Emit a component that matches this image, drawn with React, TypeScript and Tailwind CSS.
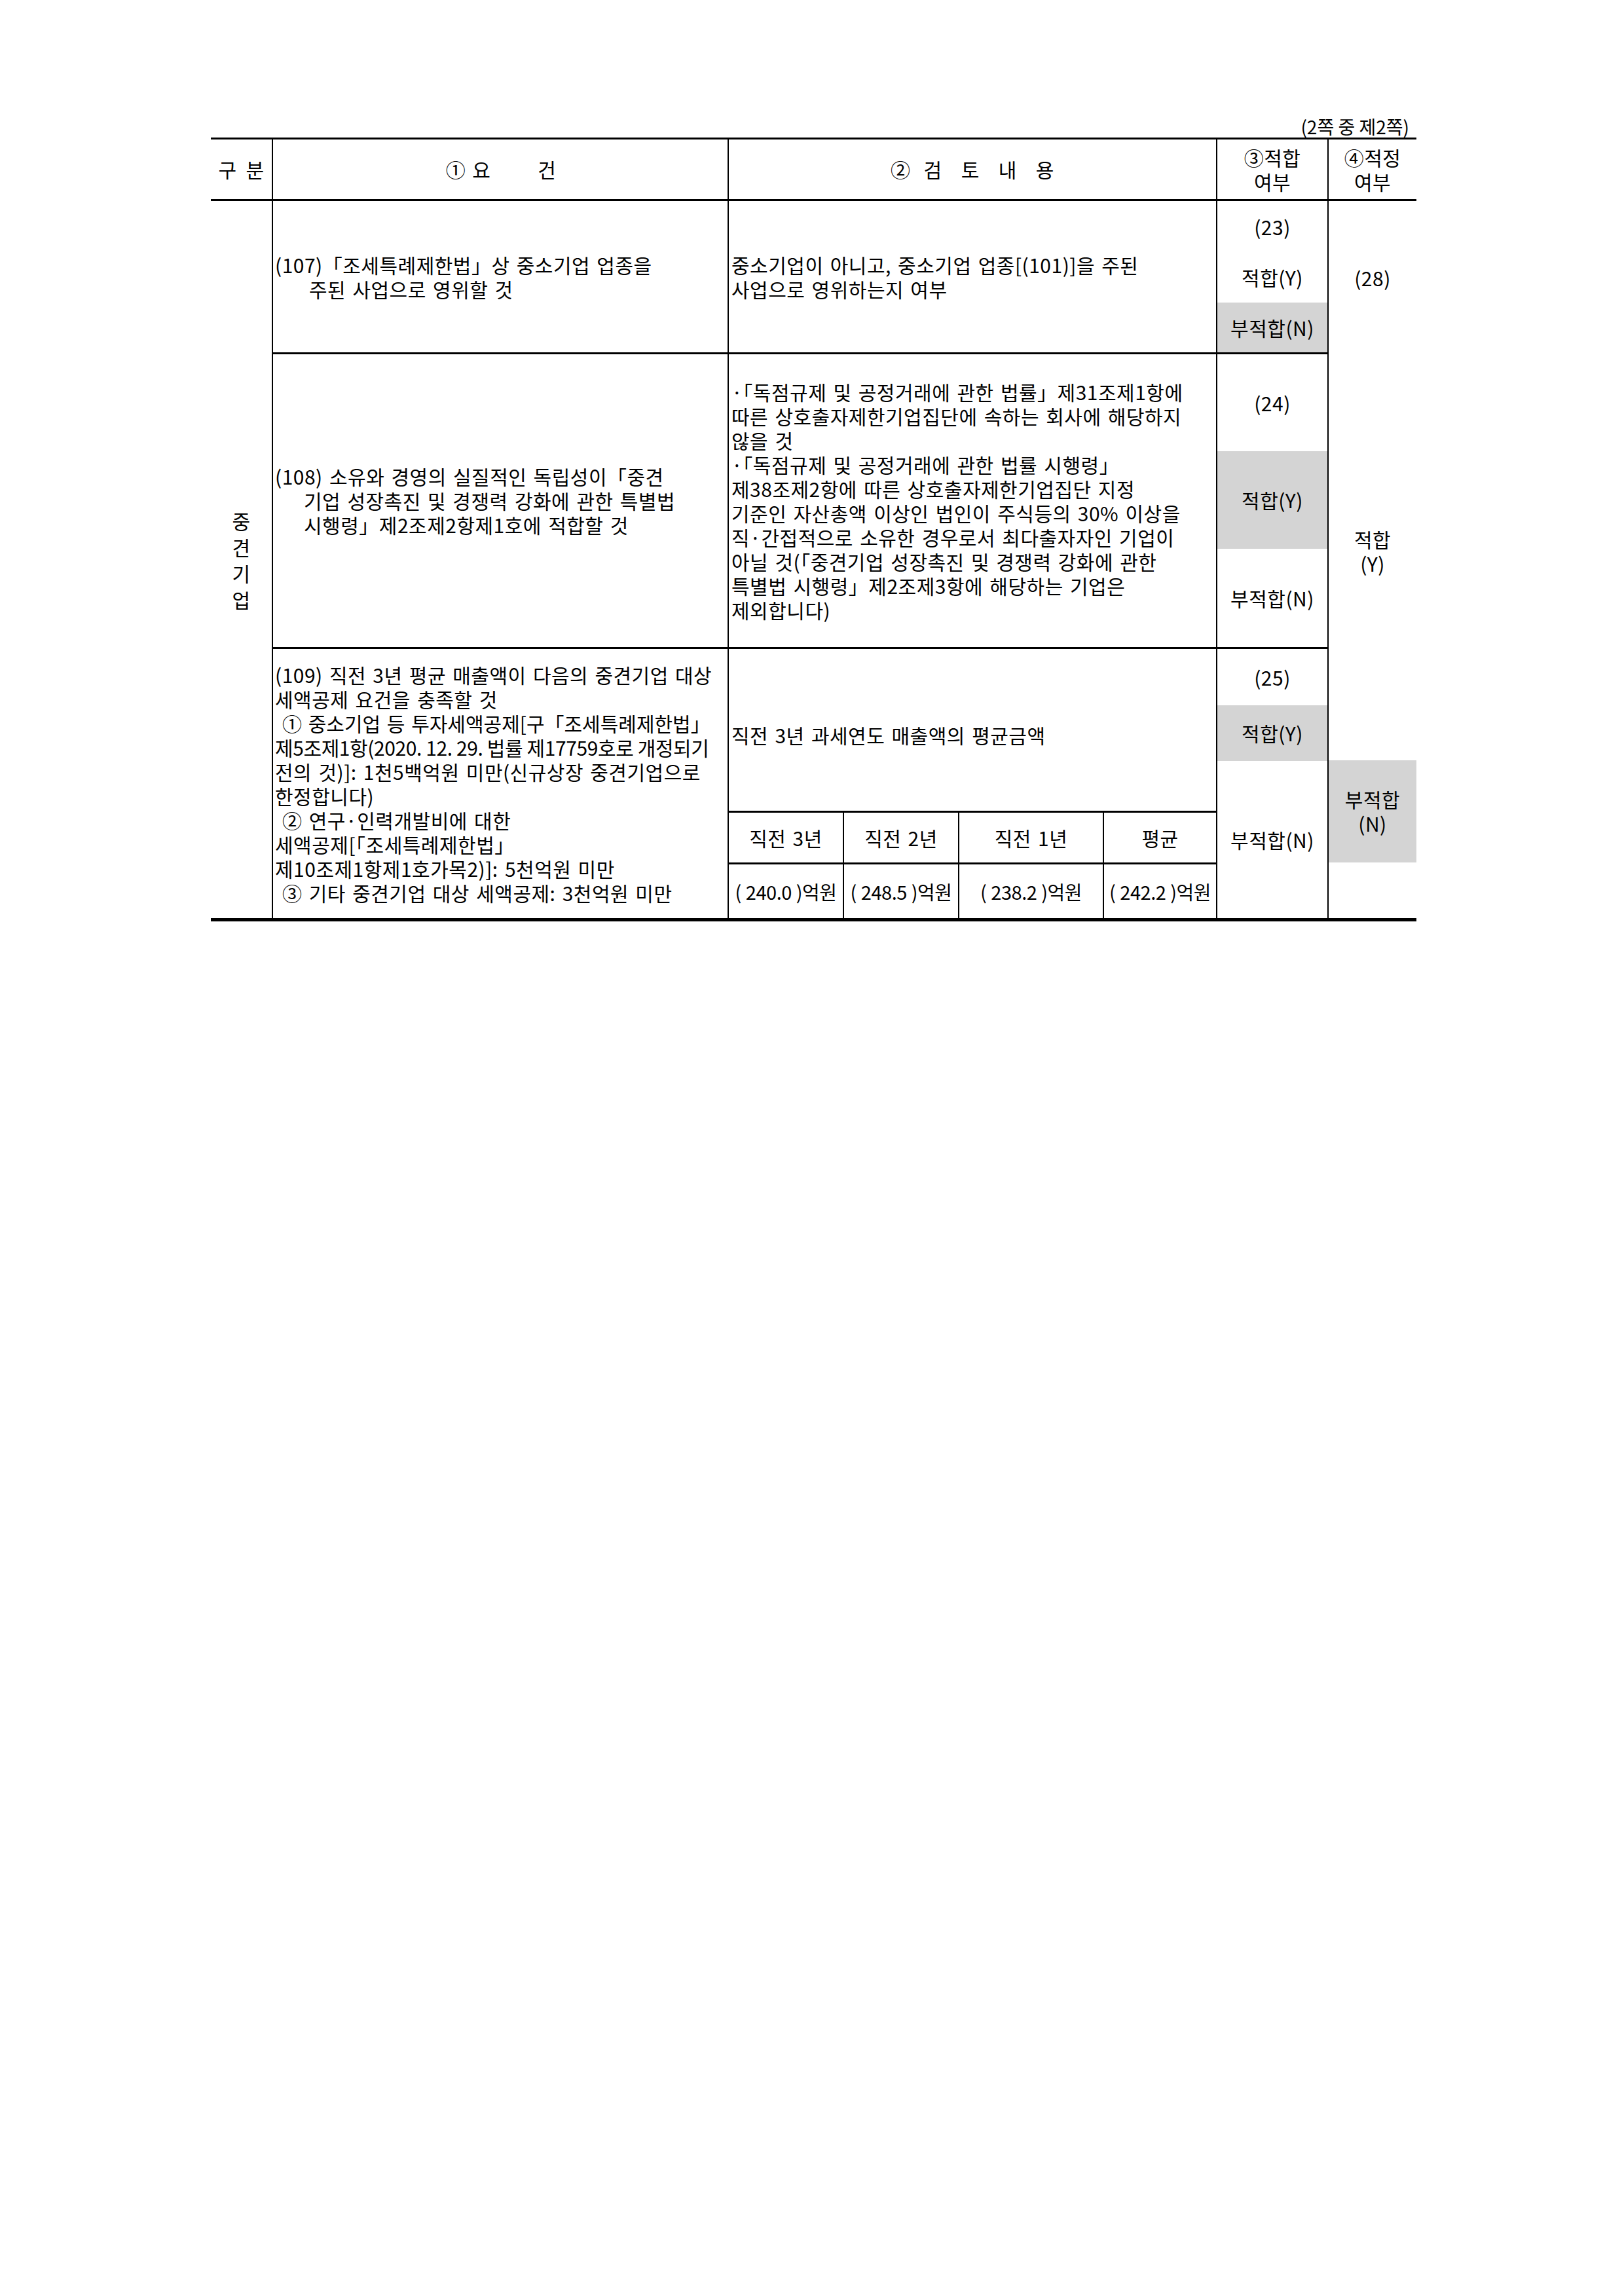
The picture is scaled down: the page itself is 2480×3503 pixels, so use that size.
import type { ReactNode } from 'react'

// 중견기업 요건 검토표 (2쪽 중 제2쪽)

type Line = { text: string; cls?: string }

function Lines({ lines }: { lines: Line[] }) {
  return (
    <>
      {lines.map((l, i) => (
        <div key={i} className={`whitespace-nowrap ${l.cls ?? ''}`}>
          {l.text}
        </div>
      ))}
    </>
  )
}

function Block({ h, gray, children }: { h: string; gray?: boolean; children: ReactNode }) {
  return (
    <div className={`flex flex-col items-center justify-center ${h} ${gray ? 'bg-[#d4d4d4]' : ''}`}>
      {children}
    </div>
  )
}

const row108Review = [
  '·「독점규제 및 공정거래에 관한 법률」제31조제1항에',
  '따른 상호출자제한기업집단에 속하는 회사에 해당하지',
  '않을 것',
  '·「독점규제 및 공정거래에 관한 법률 시행령」',
  '제38조제2항에 따른 상호출자제한기업집단 지정',
  '기준인 자산총액 이상인 법인이 주식등의 30% 이상을',
  '직·간접적으로 소유한 경우로서 최다출자자인 기업이',
  '아닐 것(「중견기업 성장촉진 및 경쟁력 강화에 관한',
  '특별법 시행령」제2조제3항에 해당하는 기업은',
  '제외합니다)',
]

const row109Req: Line[] = [
  { text: '(109) 직전 3년 평균 매출액이 다음의 중견기업 대상' },
  { text: '세액공제 요건을 충족할 것' },
  { text: '① 중소기업 등 투자세액공제[구「조세특례제한법」', cls: 'pl-[11px] tracking-[0px]' },
  { text: '제5조제1항(2020. 12. 29. 법률 제17759호로 개정되기', cls: 'tracking-[-0.4px] [word-spacing:0px]' },
  { text: '전의 것)]: 1천5백억원 미만(신규상장 중견기업으로' },
  { text: '한정합니다)' },
  { text: '② 연구·인력개발비에 대한', cls: 'pl-[11px]' },
  { text: '세액공제[「조세특례제한법」' },
  { text: '제10조제1항제1호가목2)]: 5천억원 미만' },
  { text: '③ 기타 중견기업 대상 세액공제: 3천억원 미만', cls: 'pl-[11px]' },
]

const years = [
  { label: '직전 3년', value: '( 240.0 )억원' },
  { label: '직전 2년', value: '( 248.5 )억원' },
  { label: '직전 1년', value: '( 238.2 )억원' },
  { label: '평균', value: '( 242.2 )억원' },
]

export default function App() {
  return (
    <div className="min-h-[3503px] w-[2480px] bg-white pl-[322px] pt-[176px] font-['Noto_Sans_CJK_KR','Noto_Sans',sans-serif] text-[30px] leading-[37px] tracking-[0.5px] text-black [word-spacing:3px]">
      <div className="w-[1841px]">
        <div className="h-[34px] pr-[11px] text-right text-[28px] leading-[34px] tracking-[0px] [word-spacing:0px]">
          (2쪽 중 제2쪽)
        </div>

        <div className="grid grid-cols-[93px_696px_746px_170px_136px] grid-rows-[94px_234px_450px_411px] border-t-[3px] border-b-[5px] border-black">
          {/* header */}
          <div className="col-start-1 row-start-1 flex items-center justify-center gap-[14px] border-b-[3px] border-black">
            <span>구</span>
            <span>분</span>
          </div>
          <div className="col-start-2 row-start-1 flex items-center justify-center border-b-[3px] border-l-2 border-black pl-[2px]">
            <span>①</span>
            <span className="ml-[10px]">요</span>
            <span className="ml-[72px]">건</span>
          </div>
          <div className="col-start-3 row-start-1 flex items-center justify-center gap-[29px] border-b-[3px] border-l-2 border-black">
            <span className="mr-[-9px]">②</span>
            <span>검</span>
            <span>토</span>
            <span>내</span>
            <span>용</span>
          </div>
          <div className="col-start-4 row-start-1 flex flex-col items-center justify-center border-b-[3px] border-l-2 border-black">
            <span>③적합</span>
            <span>여부</span>
          </div>
          <div className="col-start-5 row-start-1 flex flex-col items-center justify-center border-b-[3px] border-l-2 border-black">
            <span>④적정</span>
            <span>여부</span>
          </div>

          {/* 구분 */}
          <div className="col-start-1 row-start-2 row-span-3 flex flex-col items-center justify-center leading-[40px]">
            <span>중</span>
            <span>견</span>
            <span>기</span>
            <span>업</span>
          </div>

          {/* (107) */}
          <div className="col-start-2 row-start-2 flex flex-col justify-center border-b-[3px] border-l-2 border-black pl-[3px]">
            <Lines
              lines={[
                { text: '(107)「조세특례제한법」상 중소기업 업종을' },
                { text: '주된 사업으로 영위할 것', cls: 'pl-[52px]' },
              ]}
            />
          </div>
          <div className="col-start-3 row-start-2 flex flex-col justify-center border-b-[3px] border-l-2 border-black pl-[4px]">
            <Lines
              lines={[
                { text: '중소기업이 아니고, 중소기업 업종[(101)]을 주된' },
                { text: '사업으로 영위하는지 여부' },
              ]}
            />
          </div>
          <div className="col-start-4 row-start-2 flex flex-col border-b-[3px] border-l-2 border-black">
            <Block h="h-[78px]">(23)</Block>
            <Block h="h-[77px]">적합(Y)</Block>
            <Block h="h-[76px]" gray>
              부적합(N)
            </Block>
          </div>

          {/* 적정 여부 */}
          <div className="col-start-5 row-start-2 row-span-3 flex flex-col border-l-2 border-black">
            <Block h="h-[234px]">(28)</Block>
            <Block h="h-[620px] pb-[18px]">
              <span>적합</span>
              <span>(Y)</span>
            </Block>
            <Block h="h-[156px]" gray>
              <span>부적합</span>
              <span>(N)</span>
            </Block>
          </div>

          {/* (108) */}
          <div className="col-start-2 row-start-3 flex flex-col justify-center border-b-[3px] border-l-2 border-black pl-[3px]">
            <Lines
              lines={[
                { text: '(108) 소유와 경영의 실질적인 독립성이「중견' },
                { text: '기업 성장촉진 및 경쟁력 강화에 관한 특별법', cls: 'pl-[44px]' },
                { text: '시행령」제2조제2항제1호에 적합할 것', cls: 'pl-[44px]' },
              ]}
            />
          </div>
          <div className="col-start-3 row-start-3 flex flex-col justify-center border-b-[3px] border-l-2 border-black pl-[4px]">
            <Lines lines={row108Review.map((text) => ({ text }))} />
          </div>
          <div className="col-start-4 row-start-3 flex flex-col border-b-[3px] border-l-2 border-black">
            <Block h="h-[148px]">(24)</Block>
            <Block h="h-[149px]" gray>
              적합(Y)
            </Block>
            <Block h="h-[150px]">부적합(N)</Block>
          </div>

          {/* (109) */}
          <div className="col-start-2 row-start-4 flex flex-col justify-center border-l-2 border-black pl-[3px]">
            <Lines lines={row109Req} />
          </div>
          <div className="col-start-3 row-start-4 flex flex-col border-l-2 border-black">
            <div className="flex flex-1 items-center pl-[4px] pt-[16px]">직전 3년 과세연도 매출액의 평균금액</div>
            <div className="grid h-[79px] grid-cols-[174px_176px_221px_173px] border-t-[3px] border-black">
              {years.map((y, i) => (
                <div key={y.label} className={`flex items-center justify-center ${i > 0 ? 'border-l-2 border-black' : ''}`}>
                  {y.label}
                </div>
              ))}
            </div>
            <div className="grid h-[85px] grid-cols-[174px_176px_221px_173px] border-t-[3px] border-black">
              {years.map((y, i) => (
                <div
                  key={y.label}
                  className={`flex items-center justify-center whitespace-nowrap text-[29px] tracking-[-0.5px] [word-spacing:1px] ${i > 0 ? 'border-l-2 border-black' : ''}`}
                >
                  {y.value}
                </div>
              ))}
            </div>
          </div>
          <div className="col-start-4 row-start-4 flex flex-col border-l-2 border-black">
            <Block h="h-[86px]">(25)</Block>
            <Block h="h-[85px]" gray>
              적합(Y)
            </Block>
            <Block h="h-[240px]">부적합(N)</Block>
          </div>
        </div>
      </div>
    </div>
  )
}
